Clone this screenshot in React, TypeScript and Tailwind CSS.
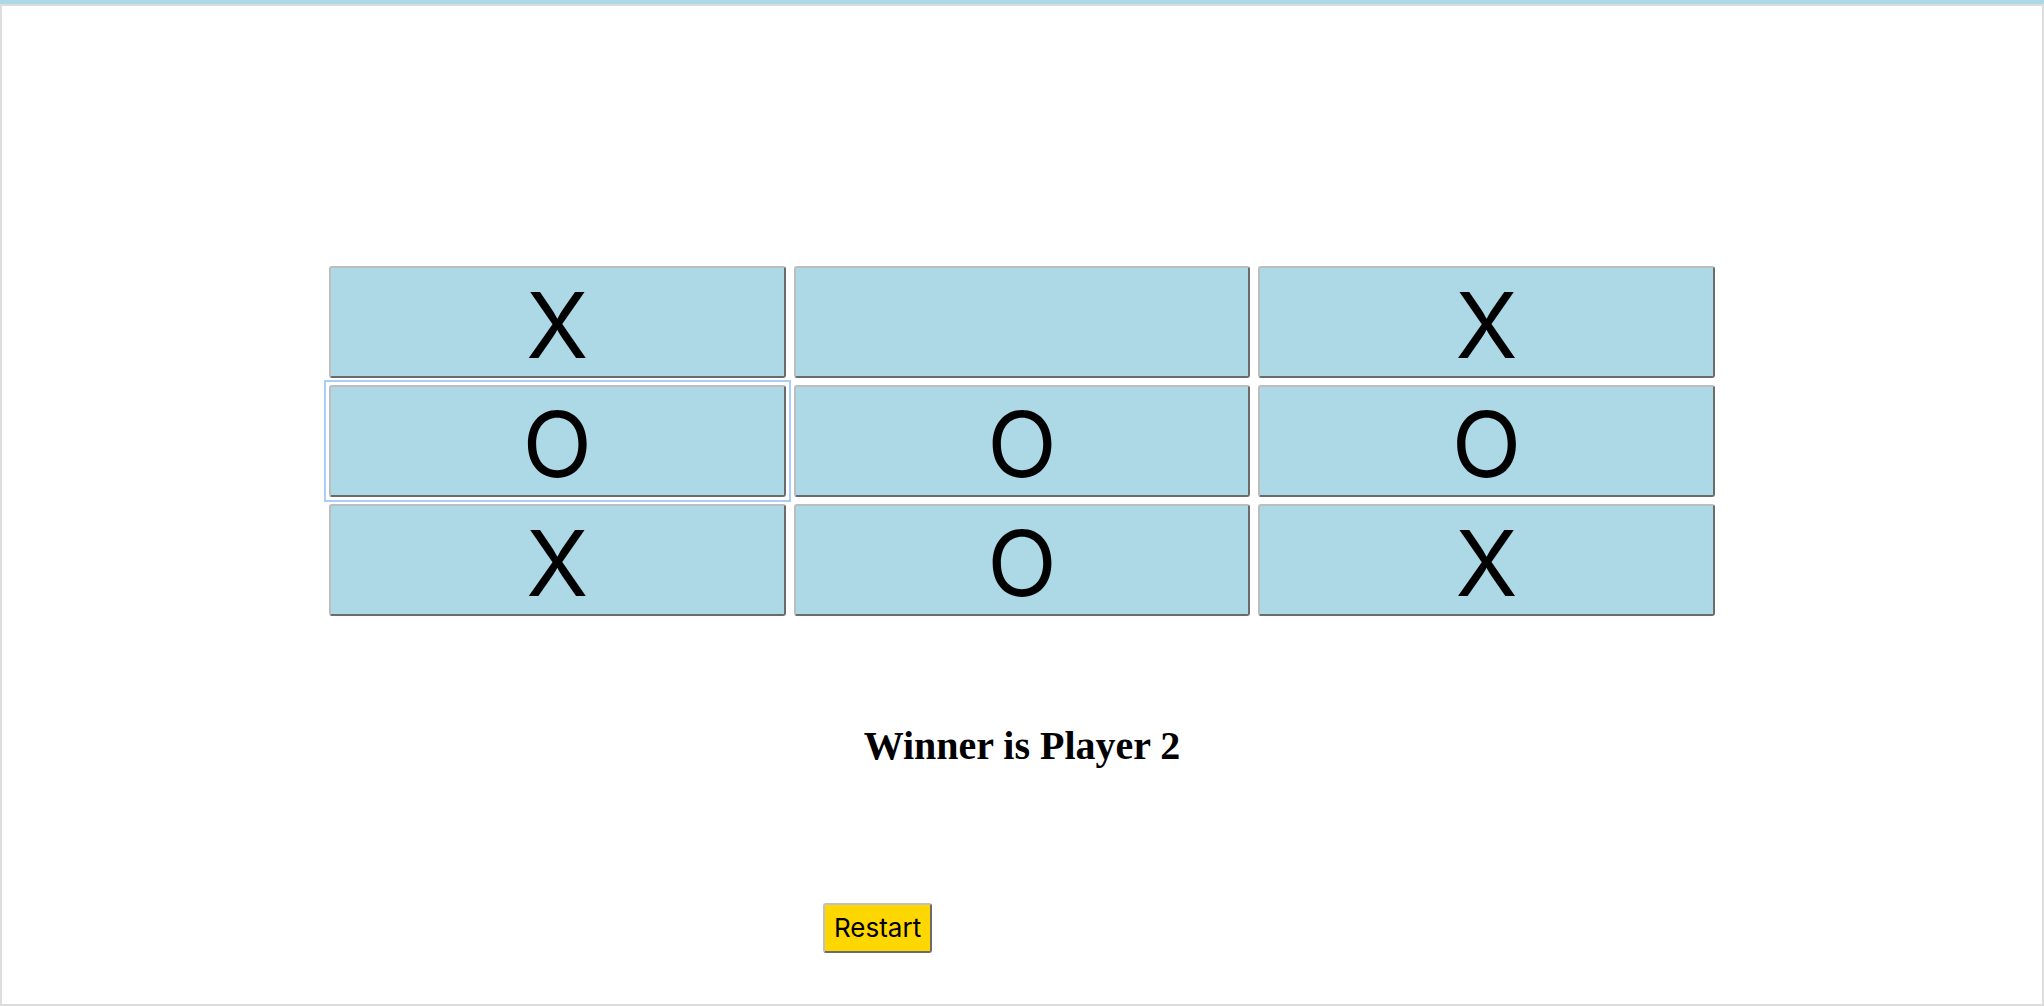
import React from "react";

const cells: string[] = ["X", "", "X", "O", "O", "O", "X", "O", "X"];

export default function App() {
  return (
    <div className="w-[2044px] h-[1006px] border-t-4 border-[#add8e6] bg-white overflow-hidden">
      <div className="h-[1002px] border-2 border-[#dddddd] pt-[260px]">
        <div className="mx-auto w-[1386px] grid grid-cols-3 gap-x-[8px] gap-y-[7px]">
          {cells.map((c, i) => (
            <div
              key={i}
              className={"flex " + (i === 3 ? "outline-2 outline-solid outline-[#a9cff8] outline-offset-[3px]" : "")}
            >
              <button className="w-full h-[112px] bg-[#add8e6] rounded-[3px] border-2 border-t-[#bdbdbd] border-l-[#bdbdbd] border-b-[#6b6b6b] border-r-[#6b6b6b] text-black text-[91px] leading-[100px] pt-[6px] font-['Inter',sans-serif]">
                {c}
              </button>
            </div>
          ))}
        </div>
        <h1 className="mt-[107px] text-center text-[40px] leading-[46px] font-bold text-black font-['Liberation_Serif','Times_New_Roman',serif]">
          Winner is Player 2
        </h1>
        <button className="mt-[134px] ml-[821px] h-[50px] px-[9px] bg-[#ffd700] rounded-[3px] border-2 border-t-[#c0c0c0] border-l-[#c0c0c0] border-b-[#6b6b6b] border-r-[#6b6b6b] text-black text-[26px] leading-[46px] font-['Inter',sans-serif]">
          Restart
        </button>
      </div>
    </div>
  );
}
